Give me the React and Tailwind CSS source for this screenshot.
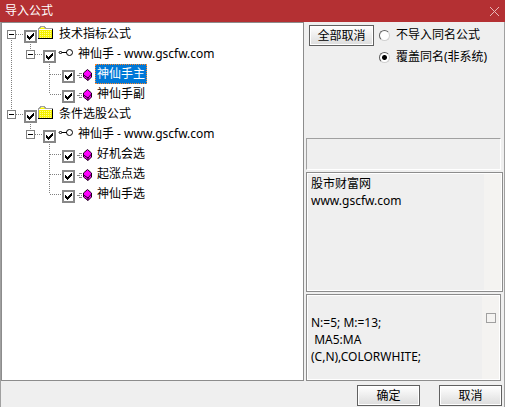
import React, { useState } from 'react';
import clsx from 'clsx';

const tree = [
  {
    id: 'tech',
    label: '技术指标公式',
    children: [
      {
        id: 'tech-sxs',
        label: '神仙手 - www.gscfw.com',
        children: [
          { id: 'tech-main', label: '神仙手主' },
          { id: 'tech-sub', label: '神仙手副' },
        ],
      },
    ],
  },
  {
    id: 'cond',
    label: '条件选股公式',
    children: [
      {
        id: 'cond-sxs',
        label: '神仙手 - www.gscfw.com',
        children: [
          { id: 'cond-chance', label: '好机会选' },
          { id: 'cond-rise', label: '起涨点选' },
          { id: 'cond-sxs-pick', label: '神仙手选' },
        ],
      },
    ],
  },
];

const FolderIcon = () => (
  <svg width="16" height="14" viewBox="0 0 16 14" shapeRendering="crispEdges">
    <path d="M1 2h1V1h5v1h1v1h6v9H1z" fill="#f6f200" />
    <path d="M2 5.500h12M2 7.500h12M2 9.500h12M2 11.500h12" stroke="#fffa90" strokeDasharray="1 1" />
    <path d="M2 1.500h5" stroke="#ffff80" />
    <path d="M1 3.500h13" stroke="#fff" />
    <path d="M.5 12V2.500h1v-1h1v-1h4v1h1v1h7" fill="none" stroke="#a0a0a0" />
    <path d="M0 12.500h15M14.500 3v10" fill="none" stroke="#000" />
  </svg>
);

const LinkIcon = () => (
  <svg width="16" height="8" viewBox="0 0 16 8" fill="none" stroke="#000">
    <circle cx="11.500" cy="3.500" r="3" />
    <path d="M.5 3.500h1v-1h2v2h-2v-1" stroke="#444" />
    <path d="M4 3.500h5" />
  </svg>
);

const FormulaIcon = () => (
  <svg width="15" height="12" viewBox="0 0 15 12">
    <path d="M2 4.500h4M0 6.500h5M2 8.500h4" stroke="#888" strokeDasharray="3 1" shapeRendering="crispEdges" />
    <path d="M10.500 .5 14.500 4v4L11 11.500 6.500 8V4z" fill="#f0f" />
    <path d="M10.500 .5 14.500 4v4L11 11.500 6.500 8V4z" fill="none" stroke="#200020" />
    <path d="M6.500 6l4.500 3 3.500-4M11 9v2.500" fill="none" stroke="#200020" />
  </svg>
);

const icons = [FolderIcon, LinkIcon, FormulaIcon];
const iconSlots = ['pt-0.5 pl-px', 'pt-[5px] pl-0.5', 'pt-[5px] pl-0.5'];

const Guide = ({ line }) => (
  <svg className="shrink-0" width="19" height="20" shapeRendering="crispEdges">
    {line && <path d="M9.500 0v20" stroke="#808080" strokeDasharray="1 1" />}
  </svg>
);

const Connector = ({ up, down, open, onClick }) => (
  <svg className="shrink-0" width="22" height="20" shapeRendering="crispEdges" onClick={onClick}>
    <g stroke="#808080" strokeDasharray="1 1">
      {up && <path d="M9.500 0v10" />}
      {down && <path d="M9.500 10v10" />}
      <path d="M10 10.500h12" />
    </g>
    {open !== undefined && (
      <g fill="none">
        <rect x="5.500" y="6.500" width="8" height="8" fill="#fff" stroke="#808080" />
        <path d="M7 10.500h5" stroke="#000" />
        {!open && <path d="M9.500 8v5" stroke="#000" />}
      </g>
    )}
  </svg>
);

const CheckBox = ({ id, checked, onChange }) => (
  <span className="mt-1.5 grid h-[13px] w-[13px] shrink-0">
    <input
      id={id}
      type="checkbox"
      checked={checked}
      onChange={onChange}
      className="col-start-1 row-start-1 h-[13px] w-[13px] appearance-none border-2 border-[#878787] bg-white"
    />
    {checked && (
      <svg className="pointer-events-none col-start-1 row-start-1" width="13" height="13" shapeRendering="crispEdges">
        <path d="M3 5h1v1h1v1h1V6h1V5h1V4h1V3h1v3H9v1H8v1H7v1H6v1H5V9H4V8H3z" fill="#000" />
      </svg>
    )}
  </span>
);

const TreeRow = ({ node, level, guides, first, last, state }) => {
  const Icon = icons[level];
  const open = node.children ? !state.closed[node.id] : undefined;

  return (
    <li>
      <div className="flex h-5">
        {guides.map((line, i) => (
          <Guide key={i} line={line} />
        ))}
        <Connector
          up={level > 0 || !first}
          down={!last}
          open={open}
          onClick={() => node.children && state.toggleOpen(node.id)}
        />
        <CheckBox id={node.id} checked={!state.unchecked[node.id]} onChange={() => state.toggleCheck(node.id)} />
        <span className={clsx('w-5 shrink-0', iconSlots[level])}>
          <Icon />
        </span>
        <label
          htmlFor={node.id}
          className={clsx(
            'border border-dotted px-px leading-[18px] whitespace-nowrap',
            state.selected === node.id ? 'border-[#ff8728] bg-[#0078d7] text-white' : 'border-transparent'
          )}
        >
          {node.label}
        </label>
      </div>
      {open && (
        <ul>
          {node.children.map((child, i) => (
            <TreeRow
              key={child.id}
              node={child}
              level={level + 1}
              guides={[...guides, !last]}
              first={i === 0}
              last={i === node.children.length - 1}
              state={state}
            />
          ))}
        </ul>
      )}
    </li>
  );
};

const PushButton = ({ children, className }) => (
  <button
    type="button"
    className={clsx(
      'h-[21px] border border-[#606060] bg-linear-to-b from-white to-[#dcdcdc] text-center leading-[18px] inset-ring inset-ring-white',
      className
    )}
  >
    {children}
  </button>
);

const Radio = ({ id, label, checked, onChange }) => (
  <div className="flex h-[22px] items-center gap-1.5">
    <input
      id={id}
      type="radio"
      name="same-name"
      checked={checked}
      onChange={onChange}
      className="h-[11px] w-[11px] appearance-none rounded-full border border-t-[#606060] border-r-[#d0d0d0] border-b-[#d0d0d0] border-l-[#606060] bg-white checked:bg-[radial-gradient(circle,#000_2px,#fff_3px)]"
    />
    <label htmlFor={id} className="whitespace-nowrap">
      {label}
    </label>
  </div>
);

const App = () => {
  const [closed, setClosed] = useState({});
  const [unchecked, setUnchecked] = useState({});
  const [mode, setMode] = useState('overwrite');

  const state = {
    closed,
    unchecked,
    selected: 'tech-main',
    toggleOpen: (id) => setClosed({ ...closed, [id]: !closed[id] }),
    toggleCheck: (id) => setUnchecked({ ...unchecked, [id]: !unchecked[id] }),
  };

  return (
    <div className="flex min-h-screen flex-col bg-[#efefef] font-['Noto_Sans','Noto_Sans_CJK_SC',sans-serif] text-[12px] text-black">
      <header className="flex h-[22px] items-center justify-between bg-[#b43033] pr-1.5 pl-[5px] text-white">
        <h1>导入公式</h1>
        <button type="button" aria-label="关闭">
          <svg width="9" height="9" stroke="#e8b8b8">
            <path d="M0 0l9 9M9 0L0 9" />
          </svg>
        </button>
      </header>

      <div className="flex flex-1 flex-col border-x border-[#a0a0a0]">
        <main className="flex flex-1">
          <div className="min-w-0 flex-1 border border-[#8c8c8c] bg-white pt-px">
            <ul>
              {tree.map((node, i) => (
                <TreeRow
                  key={node.id}
                  node={node}
                  level={0}
                  guides={[]}
                  first={i === 0}
                  last={i === tree.length - 1}
                  state={state}
                />
              ))}
            </ul>
          </div>

          <div className="flex w-[200px] flex-col pl-0.5">
            <div className="flex gap-[5px] pt-0.5 pl-[3px]">
              <PushButton className="mt-px w-[65px]">全部取消</PushButton>
              <div>
                <Radio id="skip" label="不导入同名公式" checked={mode === 'skip'} onChange={() => setMode('skip')} />
                <Radio
                  id="overwrite"
                  label="覆盖同名(非系统)"
                  checked={mode === 'overwrite'}
                  onChange={() => setMode('overwrite')}
                />
              </div>
            </div>
            <div className="mt-[70px] mr-[3px] h-8 border border-t-[#a0a0a0] border-r-white border-b-white border-l-[#a0a0a0]" />
            <div className="mt-0.5 mr-px flex h-[120px] border border-[#8c8c8c] inset-ring inset-ring-white">
              <textarea
                readOnly
                aria-label="公式来源"
                className="min-w-0 flex-1 resize-none overflow-hidden py-0.5 pl-1 leading-[17px] outline-none"
                value={'股市财富网\nwww.gscfw.com'}
              />
              <div className="m-px w-[17px] bg-[#f4f3f1]" />
            </div>
            <div className="mt-0.5 mr-[3px] flex flex-1 border border-[#8c8c8c] inset-ring inset-ring-white">
              <textarea
                readOnly
                aria-label="公式内容"
                className="min-w-0 flex-1 resize-none overflow-hidden py-0.5 pl-1 leading-[17px] outline-none"
                value={'\nN:=5; M:=13;\n MA5:MA\n(C,N),COLORWHITE;'}
              />
              <div className="m-px flex w-[17px] justify-center bg-[#f4f3f1] pt-[17px]">
                <div className="h-2.5 w-2.5 border border-[#a0a0a0]" />
              </div>
            </div>
          </div>
        </main>

        <footer className="flex h-[26px] justify-end gap-[19px] pt-1 pr-0.5">
          <PushButton className="w-[63px]">确定</PushButton>
          <PushButton className="w-[63px]">取消</PushButton>
        </footer>
      </div>
    </div>
  );
};

export default App;
